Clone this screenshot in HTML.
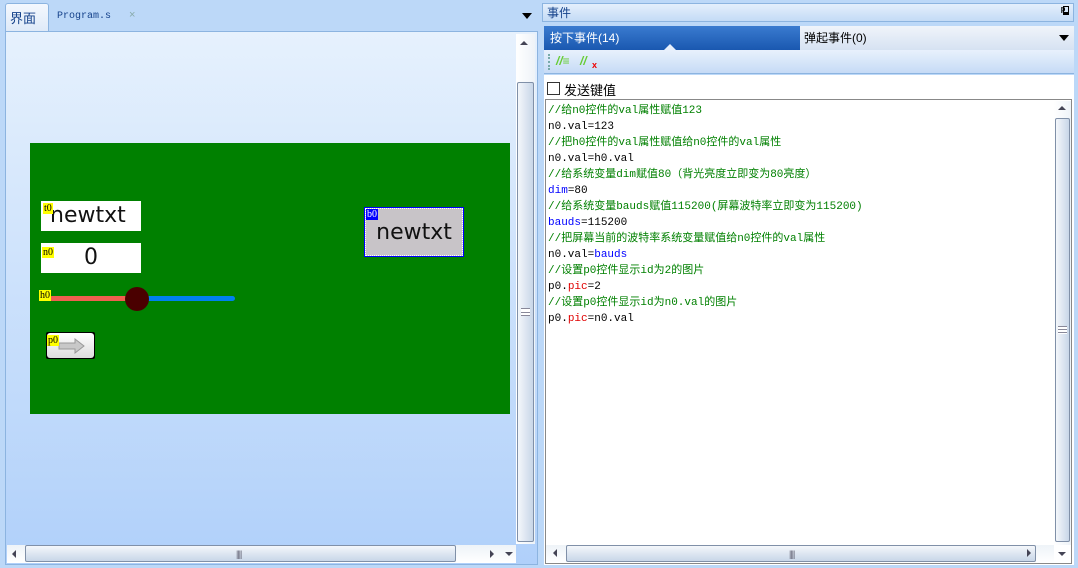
<!DOCTYPE html>
<html><head><meta charset="utf-8"><style>
*{margin:0;padding:0;box-sizing:border-box}
body{width:1078px;height:568px;overflow:hidden;background:#bcd8f8;font-family:"Liberation Sans","Noto Sans CJK SC",sans-serif;position:relative;font-size:12px}
.a{position:absolute}
.mono{font-family:"Liberation Mono","Noto Sans CJK SC",monospace;font-size:11px}
.lbl{position:absolute;background:#ff0;font-family:"Liberation Serif",serif;font-size:10px;line-height:11px;color:#000;padding:0 1px}
.g{color:#008000}.b{color:#0000ff}.r{color:#e00000}
.sb{background:linear-gradient(#fbfdff,#d8e4f2);border:1px solid #8090a8;border-radius:2px}
</style></head><body>
<!-- left panel -->
<div class="a" style="left:0;top:0;width:540px;height:568px;background:#bcd8f8"></div>
<div class="a" style="left:5px;top:3px;width:44px;height:30px;background:linear-gradient(#f4f8fe,#dde9f8);border:1px solid #8cb4e0;border-bottom:none;border-radius:3px 3px 0 0"></div>
<div class="a" style="left:10px;top:8px;font-size:13px;color:#15428b">界面</div>
<div class="a mono" style="left:57px;top:11px;font-size:10px;color:#15428b">Program.s</div>
<div class="a" style="left:129px;top:9px;font-size:11px;color:#8aa">×</div>
<div class="a" style="left:522px;top:13px;width:0;height:0;border-left:5px solid transparent;border-right:5px solid transparent;border-top:6px solid #000"></div>
<div class="a" style="left:5px;top:31px;width:533px;height:534px;border:1px solid #8cb4e0;background:linear-gradient(#e6f1fd,#b0d0fa)"></div>
<!-- vscroll -->
<div class="a" style="left:516px;top:34px;width:19px;height:510px;background:linear-gradient(90deg,#fff,#eef3f8)"></div>
<div class="a" style="left:520px;top:41px;border-left:4px solid transparent;border-right:4px solid transparent;border-bottom:4px solid #445"></div>
<div class="a sb" style="left:517px;top:82px;width:17px;height:460px;background:linear-gradient(90deg,#f4f7fb,#c8d6e8)"></div>
<div class="a" style="left:521px;top:308px;width:9px;height:8px;border-top:1px solid #889;border-bottom:1px solid #889;background:linear-gradient(#fff 0 3px,#889 3px 4px,#fff 4px)"></div>
<!-- hscroll -->
<div class="a" style="left:7px;top:545px;width:509px;height:18px;background:linear-gradient(#eef3f8,#fff)"></div>
<div class="a" style="left:12px;top:550px;border-top:4px solid transparent;border-bottom:4px solid transparent;border-right:4px solid #445"></div>
<div class="a sb" style="left:25px;top:545px;width:431px;height:17px;background:linear-gradient(#f4f7fb,#c8d6e8)"></div>
<div class="a" style="left:236px;top:549px;font-size:9px;color:#667;letter-spacing:-1px">||||</div>
<div class="a" style="left:490px;top:550px;border-top:4px solid transparent;border-bottom:4px solid transparent;border-left:4px solid #445"></div>
<div class="a" style="left:505px;top:552px;border-left:4px solid transparent;border-right:4px solid transparent;border-top:4px solid #445"></div>
<!-- green canvas -->
<div class="a" style="left:30px;top:143px;width:480px;height:271px;background:#008000"></div>
<div class="a" style="left:41px;top:201px;width:100px;height:30px;background:#fff;font-family:'DejaVu Sans',sans-serif;font-size:22px;line-height:30px;padding-left:9px;color:#111">newtxt</div>
<div class="lbl" style="left:43px;top:203px">t0</div>
<div class="a" style="left:41px;top:243px;width:100px;height:30px;background:#fff;font-family:'DejaVu Sans',sans-serif;font-size:22px;line-height:30px;text-align:center;color:#111">0</div>
<div class="lbl" style="left:42px;top:247px">n0</div>
<div class="a" style="left:50px;top:296px;width:86px;height:5px;background:#f06050;border-radius:2px"></div>
<div class="a" style="left:136px;top:296px;width:99px;height:5px;background:#0080f0;border-radius:3px"></div>
<div class="a" style="left:125px;top:287px;width:24px;height:24px;border-radius:50%;background:#4a0000"></div>
<div class="lbl" style="left:39px;top:290px">h0</div>
<div class="a" style="left:46px;top:332px;width:49px;height:27px;background:#000;border-radius:2px"></div>
<div class="a" style="left:47px;top:333px;width:47px;height:25px;background:linear-gradient(#fff,#ddd);border-radius:3px"></div>
<svg class="a" style="left:58px;top:338px" width="28" height="16"><path d="M1 5h16V1l9 7-9 7v-4H1z" fill="#c8c8c8" stroke="#999"/></svg>
<div class="lbl" style="left:47px;top:335px">p0</div>
<div class="a" style="left:364px;top:207px;width:100px;height:50px;background:#c8c4c8;border:1px solid #00f;outline:1px dotted #fff;outline-offset:-2px;font-family:'DejaVu Sans',sans-serif;font-size:22px;line-height:50px;text-align:center;color:#111">newtxt</div>
<div class="lbl" style="left:366px;top:209px;background:#00f;color:#fff">b0</div>
<!-- right panel -->
<div class="a" style="left:542px;top:3px;width:532px;height:19px;background:linear-gradient(#e4effc,#c4dbf6);border:1px solid #8cb4e0"></div>
<div class="a" style="left:547px;top:4px;font-size:12px;color:#15428b">事件</div>
<div class="a" style="left:1061px;top:5px;font-size:11px;font-weight:bold">ᵖ</div>
<div class="a" style="left:1063px;top:6px;width:6px;height:9px;border:1px solid #000;border-bottom:3px solid #000"></div>
<div class="a" style="left:544px;top:26px;width:530px;height:24px;background:linear-gradient(#f0f4fa,#d6e2f2)"></div>
<div class="a" style="left:544px;top:26px;width:256px;height:24px;background:linear-gradient(#3a7bd0,#1a58b0)"></div>
<div class="a" style="left:550px;top:29px;font-size:12px;color:#fff">按下事件(14)</div>
<div class="a" style="left:664px;top:44px;border-left:6px solid transparent;border-right:6px solid transparent;border-bottom:6px solid #e8f0fc"></div>
<div class="a" style="left:804px;top:29px;font-size:12px;color:#000">弹起事件(0)</div>
<div class="a" style="left:1059px;top:35px;border-left:5px solid transparent;border-right:5px solid transparent;border-top:6px solid #000"></div>
<div class="a" style="left:544px;top:50px;width:530px;height:24px;background:linear-gradient(#e8f1fc,#c6dbf6);border-bottom:1px solid #8cb4e0"></div>
<div class="a" style="left:548px;top:54px;width:2px;height:16px;border-left:2px dotted #7aa"></div>
<div class="a" style="left:556px;top:54px;font-size:12px;color:#6c3;font-style:italic;font-weight:bold">//≡</div>
<div class="a" style="left:580px;top:54px;font-size:12px;color:#6c3;font-style:italic;font-weight:bold">//</div>
<div class="a" style="left:592px;top:60px;font-size:9px;color:#e00;font-weight:bold">x</div>
<div class="a" style="left:544px;top:75px;width:530px;height:490px;background:#fff"></div>
<div class="a" style="left:547px;top:82px;width:13px;height:13px;border:1px solid #333;background:#fff"></div>
<div class="a" style="left:564px;top:80px;font-size:13px">发送键值</div>
<div class="a" style="left:545px;top:99px;width:527px;height:465px;border:1px solid #888"></div>
<div class="a mono" style="left:548px;top:103px;line-height:16px;white-space:pre;font-size:11px"><span class="g">//给n0控件的val属性赋值123</span>
n0.val=123
<span class="g">//把h0控件的val属性赋值给n0控件的val属性</span>
n0.val=h0.val
<span class="g">//给系统变量dim赋值80（背光亮度立即变为80亮度）</span>
<span class="b">dim</span>=80
<span class="g">//给系统变量bauds赋值115200(屏幕波特率立即变为115200)</span>
<span class="b">bauds</span>=115200
<span class="g">//把屏幕当前的波特率系统变量赋值给n0控件的val属性</span>
n0.val=<span class="b">bauds</span>
<span class="g">//设置p0控件显示id为2的图片</span>
p0.<span class="r">pic</span>=2
<span class="g">//设置p0控件显示id为n0.val的图片</span>
p0.<span class="r">pic</span>=n0.val</div>
<!-- right vscroll -->
<div class="a" style="left:1054px;top:101px;width:17px;height:444px;background:linear-gradient(90deg,#fff,#eef3f8)"></div>
<div class="a" style="left:1058px;top:106px;border-left:4px solid transparent;border-right:4px solid transparent;border-bottom:4px solid #445"></div>
<div class="a sb" style="left:1055px;top:118px;width:15px;height:424px;background:linear-gradient(90deg,#f4f7fb,#c8d6e8)"></div>
<div class="a" style="left:1058px;top:326px;width:9px;height:8px;background:linear-gradient(#889 0 1px,#fff 1px 3px,#889 3px 4px,#fff 4px 6px,#889 6px 7px,#fff 7px)"></div>
<div class="a" style="left:546px;top:545px;width:508px;height:18px;background:linear-gradient(#eef3f8,#fff)"></div>
<div class="a" style="left:553px;top:549px;border-top:4px solid transparent;border-bottom:4px solid transparent;border-right:4px solid #445"></div>
<div class="a sb" style="left:566px;top:545px;width:470px;height:17px;background:linear-gradient(#f4f7fb,#c8d6e8)"></div>
<div class="a" style="left:789px;top:549px;font-size:9px;color:#667;letter-spacing:-1px">||||</div>
<div class="a" style="left:1027px;top:549px;border-top:4px solid transparent;border-bottom:4px solid transparent;border-left:4px solid #445"></div>
<div class="a" style="left:1058px;top:552px;border-left:4px solid transparent;border-right:4px solid transparent;border-top:4px solid #445"></div>
</body></html>
